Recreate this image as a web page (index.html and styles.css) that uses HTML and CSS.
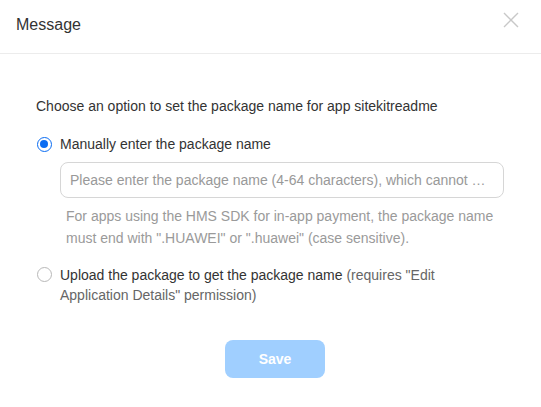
FILE: index.html
```html
<!DOCTYPE html>
<html>
<head>
<meta charset="utf-8">
<link rel="stylesheet" href="styles.css">
</head>
<body>
<div class="dialog">
  <div class="header">
    <div class="title">Message</div>
    <svg class="close" width="16" height="16" viewBox="0 0 16 16"><path d="M1 1 L15 15 M15 1 L1 15" stroke="#c8c8c8" stroke-width="1.4" fill="none"/></svg>
  </div>
  <div class="body">
    <p class="intro">Choose an option to set the package name for app sitekitreadme</p>
    <div class="option">
      <span class="radio checked"></span>
      <span class="label">Manually enter the package name</span>
    </div>
    <div class="sub">
      <div class="input"><span class="placeholder">Please enter the package name (4-64 characters), which cannot contain spaces</span></div>
      <p class="help">For apps using the HMS SDK for in-app payment, the package name must end with ".HUAWEI" or ".huawei" (case sensitive).</p>
    </div>
    <div class="option option2">
      <span class="radio"></span>
      <span class="label">Upload the package to get the package name <span class="muted">(requires "Edit Application Details" permission)</span></span>
    </div>
  </div>
  <div class="footer">
    <button class="save">Save</button>
  </div>
</div>
</body>
</html>
```
FILE: styles.css
```css
html, body {
  margin: 0;
  padding: 0;
  background: #fff;
}
body {
  font-family: "Liberation Sans", Arial, sans-serif;
  color: #333;
}
.dialog {
  width: 541px;
}
.header {
  display: flex;
  justify-content: space-between;
  align-items: flex-start;
  padding: 13px 22px 16px 16px;
  border-bottom: 1px solid #ececec;
}
.title {
  font-size: 16px;
  line-height: 24px;
  color: #333;
}
.close {
  margin-top: -1px;
}
.body {
  padding: 41px 37px 0 36px;
  font-size: 14px;
  line-height: 22px;
}
.intro {
  margin: 0;
}
.option {
  display: flex;
  align-items: flex-start;
  margin-top: 16px;
}
.radio {
  flex: none;
  box-sizing: border-box;
  width: 15px;
  height: 15px;
  border-radius: 50%;
  border: 1px solid #b8b8b8;
  margin: 4px 8px 0 1px;
  position: relative;
}
.radio.checked {
  border: 1.5px solid #0a6cf2;
}
.radio.checked::after {
  content: "";
  position: absolute;
  left: 2px;
  top: 2px;
  width: 8px;
  height: 8px;
  border-radius: 50%;
  background: #0a6cf2;
}
.label {
  color: #333;
}
.muted {
  color: #666;
}
.sub {
  padding-left: 24px;
}
.input {
  margin-top: 7px;
  box-sizing: border-box;
  height: 36px;
  border: 1px solid #d6d6d6;
  border-radius: 8px;
  padding: 0 12px 0 9px;
  display: flex;
  align-items: center;
}
.placeholder {
  color: #999;
  white-space: nowrap;
  overflow: hidden;
  text-overflow: ellipsis;
}
.help {
  margin: 7px 0 0;
  padding-left: 6px;
  color: #9a9a9a;
}
.option2 {
  margin-top: 16px;
  line-height: 20px;
}
.option2 .radio {
  margin-top: 2px;
}
.footer {
  display: flex;
  justify-content: center;
  padding: 35px 0 0 9px;
}
.save {
  width: 100px;
  height: 38px;
  border: none;
  border-radius: 8px;
  background: #a0cfff;
  color: #fff;
  font-family: "Liberation Sans", Arial, sans-serif;
  font-size: 14px;
  font-weight: bold;
}
```
